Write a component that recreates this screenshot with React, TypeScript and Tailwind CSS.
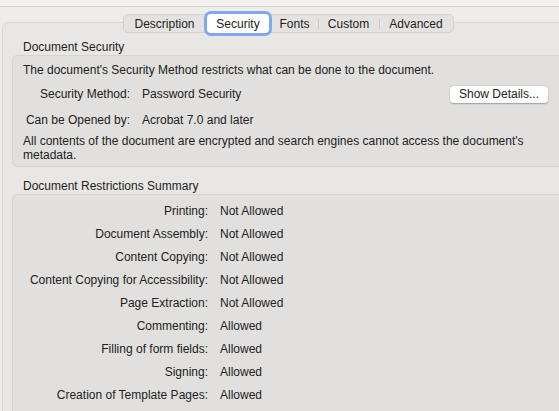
import React from 'react';

const tabs = [
    { name: 'Description', w: 'w-[81px]' },
    { name: 'Security', w: 'w-[66px]', active: true },
    { name: 'Fonts', w: 'w-[47px]' },
    { name: 'Custom', w: 'w-[61px]', sep: true },
    { name: 'Advanced', w: 'w-[74px]', sep: true },
];

const restrictions: [string, string][] = [
    ['Printing', 'Not Allowed'],
    ['Document Assembly', 'Not Allowed'],
    ['Content Copying', 'Not Allowed'],
    ['Content Copying for Accessibility', 'Not Allowed'],
    ['Page Extraction', 'Not Allowed'],
    ['Commenting', 'Allowed'],
    ['Filling of form fields', 'Allowed'],
    ['Signing', 'Allowed'],
    ['Creation of Template Pages', 'Allowed'],
];

function TabBar() {
    return (
        <div className="self-start ml-[111px] -mt-[9px] flex h-[19px] rounded-[5px] border border-[#d2d1cf] bg-[#e4e3e1]">
            {tabs.map((t) => (
                <div key={t.name} className={`relative flex items-center justify-center ${t.w}`}>
                    {t.sep && <span className="absolute left-0 top-[4px] h-[10px] w-px bg-[#c9c8c6]" />}
                    {t.active ? (
                        <div className="absolute inset-x-[2px] -inset-y-px flex items-center justify-center rounded-[4px] bg-white shadow-sm ring-[3px] ring-[#7fa8ef]">
                            {t.name}
                        </div>
                    ) : (
                        <span>{t.name}</span>
                    )}
                </div>
            ))}
        </div>
    );
}

export default function App() {
    return (
        <div
            className="relative h-[411px] w-[559px] overflow-hidden bg-[#eeedeb] text-[12px] text-[#222222]"
            style={{ fontFamily: '"Liberation Sans", Arial, sans-serif' }}
        >
            {/* Toolbar strip */}
            <div className="h-[7px] border-b border-[#d3d2d0] bg-[#f3f2f0]" />

            {/* Tab view */}
            <div className="ml-[2px] mt-[15px] flex w-[573px] flex-col rounded-[6px] border border-[#d8d7d5] bg-[#e8e7e5] pl-[9px]">
                <TabBar />

                <div className="mt-[7px] pl-[11px] leading-[15px]">Document Security</div>
                <div className="rounded-[5px] border border-[#d5d4d2] bg-[#e1e0de] pb-[4px] pl-[10px]">
                    <div className="mt-[7px] leading-[15px]">
                        The document's Security Method restricts what can be done to the document.
                    </div>
                    <div className="mt-[7px] flex h-[18px] items-center">
                        <span className="w-[107px] text-right">Security Method:</span>
                        <span className="ml-[12px]">Password Security</span>
                        <button className="ml-auto mr-[25px] flex h-[17px] w-[98px] items-center justify-center rounded-[4px] bg-white shadow-[0_0.5px_1.5px_rgba(0,0,0,0.3)]">
                            Show Details...
                        </button>
                    </div>
                    <div className="mt-[10px] flex leading-[15px]">
                        <span className="w-[107px] text-right">Can be Opened by:</span>
                        <span className="ml-[12px]">Acrobat 7.0 and later</span>
                    </div>
                    <div className="mt-[7px] w-[510px] leading-[13.5px]">
                        All contents of the document are encrypted and search engines cannot access the document's metadata.
                    </div>
                </div>

                <div className="mt-[12px] pl-[11px] leading-[15px]">Document Restrictions Summary</div>
                <div className="h-[240px] rounded-[5px] border border-[#d5d4d2] bg-[#e1e0de] pt-[4px]">
                    {restrictions.map(([label, value]) => (
                        <div key={label} className="flex h-[23px] items-center">
                            <span className="w-[195px] text-right">{label}:</span>
                            <span className="ml-[12px]">{value}</span>
                        </div>
                    ))}
                </div>
            </div>
        </div>
    );
}
